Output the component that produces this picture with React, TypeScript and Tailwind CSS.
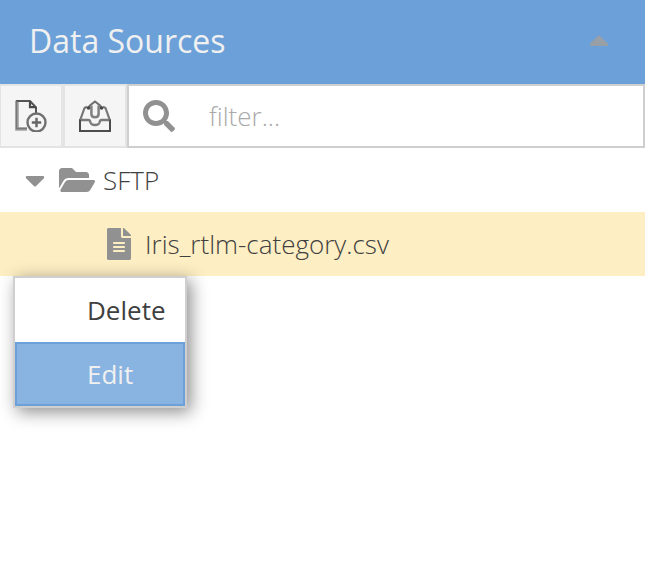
import { FaCaretDown, FaCaretUp, FaFileAlt, FaFolderOpen, FaSearch } from "react-icons/fa";

function AddFileIcon() {
  return (
    <svg width="32" height="32" viewBox="0 0 32 32" fill="none">
      <path d="M2 0.500V29H12" stroke="#a2a2a2" strokeWidth="3.600" />
      <path d="M1 1H15L21 7.500V13" stroke="#555" strokeWidth="2" />
      <path d="M1.500 1V28.500H12" stroke="#777" strokeWidth="1.400" />
      <path d="M15 1V7.200H21" stroke="#4a4a4a" strokeWidth="2.200" />
      <circle cx="21.500" cy="22.500" r="9" stroke="#707070" strokeWidth="2.400" />
      <path d="M21.500 17.800V27.200M16.800 22.500H26.200" stroke="#666" strokeWidth="2.400" />
    </svg>
  );
}

function OutboxIcon() {
  return (
    <svg width="32" height="32" viewBox="0 0 32 32" fill="none" strokeLinejoin="round">
      <path d="M1 20H9.500Q11 20 11.500 22.500Q12.200 25 16 25Q19.800 25 20.500 22.500Q21 20 22.500 20H31" stroke="#7a7a7a" strokeWidth="2.300" />
      <path d="M1 19V31H31V19" stroke="#4c4c4c" strokeWidth="2" strokeLinejoin="miter" />
      <path d="M1.200 20L5.500 8L8 6.800M30.800 20L26.500 8L24 6.800" stroke="#757575" strokeWidth="2.200" />
      <path d="M9 8L11.500 5L16 1.500L20.500 5L23 8" stroke="#707070" strokeWidth="2.200" />
      <path d="M12.400 5.500V14Q12.400 17.300 16 17.300Q19.600 17.300 19.600 14V5.500" stroke="#808080" strokeWidth="2.500" />
      <circle cx="9.500" cy="8" r="1.800" fill="#484848" />
      <circle cx="22.500" cy="8" r="1.800" fill="#484848" />
    </svg>
  );
}

export default function App() {
  return (
    <div className="relative h-[580px] w-[645px] overflow-hidden bg-white font-['Open_Sans',sans-serif] text-[26px] text-[#404040]">
      <header className="flex h-[84px] items-center justify-between bg-[#6ca0d8] pr-9 pl-[29px] text-[#f0f0f0]">
        <h1 className="pb-[3px] text-[32px] leading-none font-normal">Data Sources</h1>
        <FaCaretUp className="mb-1 h-8 w-5 text-[#999fa6]" />
      </header>

      <div className="flex h-16">
        <button className="flex w-[63px] items-center justify-center border-2 border-l border-[#e4e4e4] bg-[#f5f5f5]">
          <AddFileIcon />
        </button>
        <button className="flex w-16 items-center justify-center border-2 border-[#e4e4e4] bg-[#f5f5f5]">
          <OutboxIcon />
        </button>
        <div className="flex flex-1 items-center border-2 border-[#cfcfcf] bg-white pl-3.5">
          <FaSearch className="size-8 shrink-0 text-[#919191]" />
          <input placeholder="filter..." className="ml-[34px] w-80 font-light outline-none placeholder:text-[#a9a9a9]" />
        </div>
      </div>

      <div className="flex h-16 items-center pl-[25px] font-light">
        <FaCaretDown className="h-8 w-5 text-[#919191]" />
        <FaFolderOpen className="ml-3.5 h-8 w-9 text-[#919191]" />
        <span className="ml-2">SFTP</span>
      </div>
      <div className="flex h-16 items-center bg-[#fdeec3] pl-[107px] font-light">
        <FaFileAlt className="h-8 w-6 text-[#919191]" />
        <span className="ml-3.5">Iris_rtlm-category.csv</span>
      </div>

      <div className="absolute top-[276px] left-[13px] w-[174px] border-2 border-[#cfcfcf] bg-white shadow-[4px_4px_16px_rgba(0,0,0,0.45)]">
        <div className="flex h-16 items-center pl-[72px]">Delete</div>
        <div className="flex h-16 items-center border-2 border-[#6ca0d8] bg-[#89b3e0] pl-[70px] text-[#f0f0f0]">Edit</div>
      </div>
    </div>
  );
}
